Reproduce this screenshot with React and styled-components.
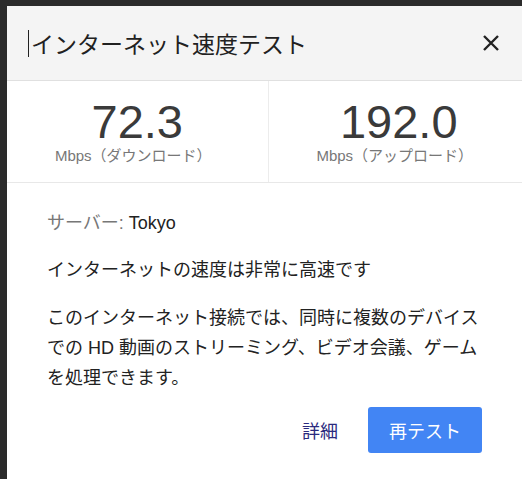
import React from 'react';
import styled, { createGlobalStyle } from 'styled-components';

const GlobalStyle = createGlobalStyle`
  html, body {
    margin: 0;
    padding: 0;
    background: #2b2b2b;
    overflow: hidden;
  }
  body {
    font-family: "Liberation Sans", "Noto Sans CJK JP", sans-serif;
    color: #222;
  }
`;

const Backdrop = styled.div`
  width: 522px;
  height: 479px;
  padding: 6px 0 0 7px;
  box-sizing: border-box;
  overflow: hidden;
`;

const Dialog = styled.div`
  width: 522px;
  height: 473px;
  background: #fff;
  display: flex;
  flex-direction: column;
`;

const Header = styled.div`
  height: 74px;
  flex-shrink: 0;
  background: #f4f4f4;
  border-bottom: 1px solid #e0e0e0;
  display: flex;
  align-items: center;
  justify-content: space-between;
  padding: 0 29px 0 21px;
`;

const Title = styled.h1`
  margin: 0;
  font-weight: 400;
  font-size: 23px;
  color: #212121;
  display: flex;
  align-items: center;
`;

const Caret = styled.span`
  display: inline-block;
  width: 1px;
  height: 27px;
  background: #222;
  margin-right: 2px;
`;

const CloseButton = styled.button`
  border: 0;
  background: none;
  padding: 0;
  width: 18px;
  height: 18px;
  display: flex;
  cursor: pointer;
`;

const Stats = styled.div`
  display: flex;
  height: 101px;
  flex-shrink: 0;
  border-bottom: 1px solid #e8e8e8;
`;

const Stat = styled.div`
  flex: 1;
  display: flex;
  flex-direction: column;
  align-items: center;
  padding-top: 16px;
  border-right: ${(p) => (p.$divider ? '1px solid #ececec' : 'none')};
`;

const Value = styled.div`
  font-size: 47px;
  line-height: 50px;
  color: #3a3a3a;
`;

const Unit = styled.div`
  font-size: 15px;
  line-height: 17px;
  color: #777;
  margin-left: -8px;
`;

const Body = styled.div`
  padding: 25px 40px 0 40px;
  font-size: 18px;
  line-height: 30px;
`;

const Para = styled.p`
  margin: 0 0 ${(p) => p.$gap || 17}px 0;
  color: #222;
`;

const Muted = styled.span`
  color: #777;
`;

const Footer = styled.div`
  display: flex;
  justify-content: flex-end;
  align-items: center;
  gap: 14px;
  padding: 0 47px 0 0;
  margin-top: -2px;
`;

const LinkButton = styled.button`
  border: 0;
  background: none;
  font: inherit;
  font-size: 18px;
  color: #2b2a7e;
  padding: 0 16px;
  height: 46px;
  cursor: pointer;
`;

const PrimaryButton = styled.button`
  border: 0;
  border-radius: 3px;
  background: #4285f4;
  color: #fff;
  font: inherit;
  font-size: 18px;
  width: 114px;
  height: 46px;
  cursor: pointer;
`;

export default function App() {
  return (
    <>
      <GlobalStyle />
      <Backdrop>
        <Dialog>
          <Header>
            <Title>
              <Caret />
              インターネット速度テスト
            </Title>
            <CloseButton aria-label="閉じる">
              <svg width="18" height="18" viewBox="0 0 18 18">
                <path d="M2 2 L16 16 M16 2 L2 16" stroke="#222" strokeWidth="2.4" />
              </svg>
            </CloseButton>
          </Header>
          <Stats>
            <Stat $divider>
              <Value>72.3</Value>
              <Unit>Mbps（ダウンロード）</Unit>
            </Stat>
            <Stat>
              <Value>192.0</Value>
              <Unit>Mbps（アップロード）</Unit>
            </Stat>
          </Stats>
          <Body>
            <Para>
              <Muted>サーバー:</Muted> Tokyo
            </Para>
            <Para $gap={18}>インターネットの速度は非常に高速です</Para>
            <Para $gap={16}>
              このインターネット接続では、同時に複数のデバイス
              <br />
              での HD 動画のストリーミング、ビデオ会議、ゲーム
              <br />
              を処理できます。
            </Para>
          </Body>
          <Footer>
            <LinkButton>詳細</LinkButton>
            <PrimaryButton>再テスト</PrimaryButton>
          </Footer>
        </Dialog>
      </Backdrop>
    </>
  );
}
